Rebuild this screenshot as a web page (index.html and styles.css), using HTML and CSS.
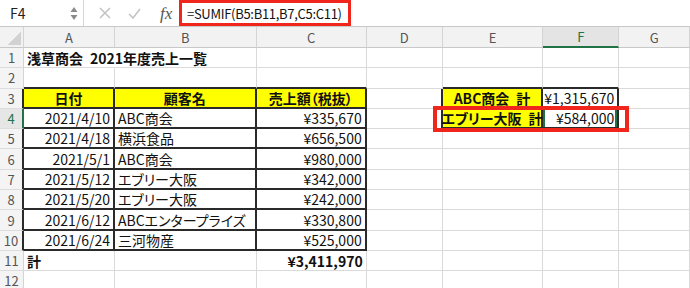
FILE: index.html
```html
<!DOCTYPE html>
<html lang="ja">
<head>
  <meta charset="UTF-8">
  <meta name="viewport" content="width=device-width, initial-scale=1.0">
  <title>浅草商会 2021年度売上一覧</title>
  <link rel="stylesheet" href="styles.css">
</head>
<body>
  <div class="bar">
    <div class="namebox">
      <span class="cellref">F4</span>
      <svg class="spin" width="8" height="16" viewBox="0 0 8 16">
        <path d="M4 2 L7.5 7 L0.5 7 Z" fill="#8a8a8a"/>
        <path d="M4 15 L7.5 10 L0.5 10 Z" fill="#8a8a8a"/>
      </svg>
    </div>
    <div class="tools">
      <svg class="tool" width="12" height="12" viewBox="0 0 12 12">
        <path d="M1 1 L11 11 M11 1 L1 11" stroke="#c4c4c4" stroke-width="1.6" fill="none"/>
      </svg>
      <svg class="tool" width="13" height="11" viewBox="0 0 13 11">
        <path d="M1 6 L5 10 L12 1" stroke="#c4c4c4" stroke-width="1.6" fill="none"/>
      </svg>
      <span class="fx">fx</span>
    </div>
    <div class="formula">=SUMIF(B5:B11,B7,C5:C11)</div>
  </div>
  <div class="sep"></div>

  <div class="sheet">
    <div class="grid">
      <!-- column headers -->
      <div class="h corner"></div>
      <div class="h">A</div>
      <div class="h">B</div>
      <div class="h">C</div>
      <div class="h">D</div>
      <div class="h">E</div>
      <div class="h on">F</div>
      <div class="h">G</div>

      <!-- 1 -->
      <div class="r">1</div>
      <div class="c b nogrid">浅草商会&ensp;2021年度売上一覧</div>
      <div class="c"></div>
      <div class="c"></div>
      <div class="c"></div>
      <div class="c"></div>
      <div class="c"></div>
      <div class="c"></div>

      <!-- 2 -->
      <div class="r">2</div>
      <div class="c tb"></div>
      <div class="c tb"></div>
      <div class="c tb"></div>
      <div class="c"></div>
      <div class="c tb"></div>
      <div class="c tb"></div>
      <div class="c"></div>

      <!-- 3 -->
      <div class="r tr">3</div>
      <div class="c t y b mid">日付</div>
      <div class="c t y b mid">顧客名</div>
      <div class="c t y b mid">売上額（税抜）</div>
      <div class="c tr"></div>
      <div class="c t y b mid">ABC商会&ensp;計</div>
      <div class="c t num">¥1,315,670</div>
      <div class="c"></div>

      <!-- 4 -->
      <div class="r on">4</div>
      <div class="c t num">2021/4/10</div>
      <div class="c t">ABC商会</div>
      <div class="c t num">¥335,670</div>
      <div class="c tr"></div>
      <div class="c t y b mid">エブリー大阪&ensp;計</div>
      <div class="c t num sel">¥584,000</div>
      <div class="c"></div>

      <!-- 5 -->
      <div class="r tr">5</div>
      <div class="c t num">2021/4/18</div>
      <div class="c t">横浜食品</div>
      <div class="c t num">¥656,500</div>
      <div class="c"></div>
      <div class="c"></div>
      <div class="c"></div>
      <div class="c"></div>

      <!-- 6 -->
      <div class="r tr">6</div>
      <div class="c t num">2021/5/1</div>
      <div class="c t">ABC商会</div>
      <div class="c t num">¥980,000</div>
      <div class="c"></div>
      <div class="c"></div>
      <div class="c"></div>
      <div class="c"></div>

      <!-- 7 -->
      <div class="r tr">7</div>
      <div class="c t num">2021/5/12</div>
      <div class="c t">エブリー大阪</div>
      <div class="c t num">¥342,000</div>
      <div class="c"></div>
      <div class="c"></div>
      <div class="c"></div>
      <div class="c"></div>

      <!-- 8 -->
      <div class="r tr">8</div>
      <div class="c t num">2021/5/20</div>
      <div class="c t">エブリー大阪</div>
      <div class="c t num">¥242,000</div>
      <div class="c"></div>
      <div class="c"></div>
      <div class="c"></div>
      <div class="c"></div>

      <!-- 9 -->
      <div class="r tr">9</div>
      <div class="c t num">2021/6/12</div>
      <div class="c t">ABCエンタープライズ</div>
      <div class="c t num">¥330,800</div>
      <div class="c"></div>
      <div class="c"></div>
      <div class="c"></div>
      <div class="c"></div>

      <!-- 10 -->
      <div class="r tr">10</div>
      <div class="c t num">2021/6/24</div>
      <div class="c t">三河物産</div>
      <div class="c t num">¥525,000</div>
      <div class="c"></div>
      <div class="c"></div>
      <div class="c"></div>
      <div class="c"></div>

      <!-- 11 -->
      <div class="r">11</div>
      <div class="c b">計</div>
      <div class="c"></div>
      <div class="c b num">¥3,411,970</div>
      <div class="c"></div>
      <div class="c"></div>
      <div class="c"></div>
      <div class="c"></div>

      <!-- 12 -->
      <div class="r">12</div>
      <div class="c"></div>
      <div class="c"></div>
      <div class="c"></div>
      <div class="c"></div>
      <div class="c"></div>
      <div class="c"></div>
      <div class="c"></div>
    </div>

    <!-- annotation box around E4:F4 -->
    <div class="mark"></div>
  </div>
</body>
</html>
```

FILE: styles.css
```css
body {
  margin: 0;
  width: 690px;
  height: 288px;
  overflow: hidden;
  background: #fff;
  font-family: "Noto Sans CJK JP", sans-serif;
  font-size: 14px;
  color: #111;
}

/* formula bar */
.bar {
  display: flex;
  height: 26px;
}
.namebox {
  width: 84px;
  display: flex;
  align-items: center;
  justify-content: space-between;
  padding: 0 5px 0 10px;
  box-sizing: border-box;
  border-right: 1px solid #d6d6d6;
}
.cellref {
  font-size: 14px;
  color: #222;
  line-height: 1;
}
.tools {
  width: 95px;
  display: flex;
  align-items: center;
  gap: 17px;
  padding-left: 15px;
  box-sizing: border-box;
}
.fx {
  font-family: "Liberation Serif", serif;
  font-style: italic;
  font-size: 17px;
  color: #555;
  margin-left: 2px;
  line-height: 1;
}
.formula {
  width: 172px;
  border: 3px solid #f0261c;
  box-sizing: border-box;
  display: flex;
  align-items: center;
  padding-left: 5px;
  font-size: 13px;
  letter-spacing: -0.3px;
  line-height: 1;
  color: #111;
  white-space: nowrap;
  overflow: hidden;
}
.sep {
  height: 1px;
  background: #c8c8c8;
}

/* sheet */
.sheet {
  position: relative;
}
.grid {
  display: grid;
  grid-template-columns: 24px 91px 141.7px 110px 76px 100.6px 76px 1fr;
  grid-template-rows: 21px repeat(12, 20.3px);
}
.grid > div {
  box-sizing: border-box;
  display: flex;
  align-items: center;
  white-space: nowrap;
  line-height: 1;
}
.h {
  background: #f2f2f2;
  color: #555;
  font-size: 13px;
  justify-content: center;
  border-right: 1px solid #d4d4d4;
  border-bottom: 1px solid #c8c8c8;
}
.h.on {
  background: #e4e4e4;
  color: #217346;
  border-bottom: 2px solid #217346;
}
.corner {
  background: #f2f2f2 linear-gradient(to bottom right, transparent 50%, #d2d2d2 50%) no-repeat right 2px bottom 2px / 14px 14px;
}
.r {
  background: #f4f4f4;
  color: #555;
  font-size: 13px;
  justify-content: center;
  border-right: 1px solid #d4d4d4;
  border-bottom: 1px solid #dcdcdc;
}
.r.on {
  color: #217346;
  background: #e6e6e6;
  border-right: 2px solid #217346;
}
.c {
  padding: 0 3px;
  border-right: 1px solid #dadada;
  border-bottom: 1px solid #dadada;
  font-feature-settings: "palt";
}
.nogrid {
  border-right-color: transparent !important;
}
.b {
  font-weight: bold;
}
.num {
  justify-content: flex-end;
}
.mid {
  justify-content: center;
}
.y {
  background: #ffff00;
}
.grid > .t {
  border-right: 2px solid #2a2a2a;
  border-bottom: 2px solid #2a2a2a;
}
.grid > .tb {
  border-bottom: 2px solid #2a2a2a;
}
.grid > .tr {
  border-right: 2px solid #2a2a2a;
}
.sel {
  box-shadow: inset 2px 0 0 #217346, inset -2px 0 0 #217346;
}

.mark {
  position: absolute;
  left: 433px;
  top: 79px;
  width: 196px;
  height: 26px;
  border: 4px solid #f0261c;
  box-sizing: border-box;
}
```
